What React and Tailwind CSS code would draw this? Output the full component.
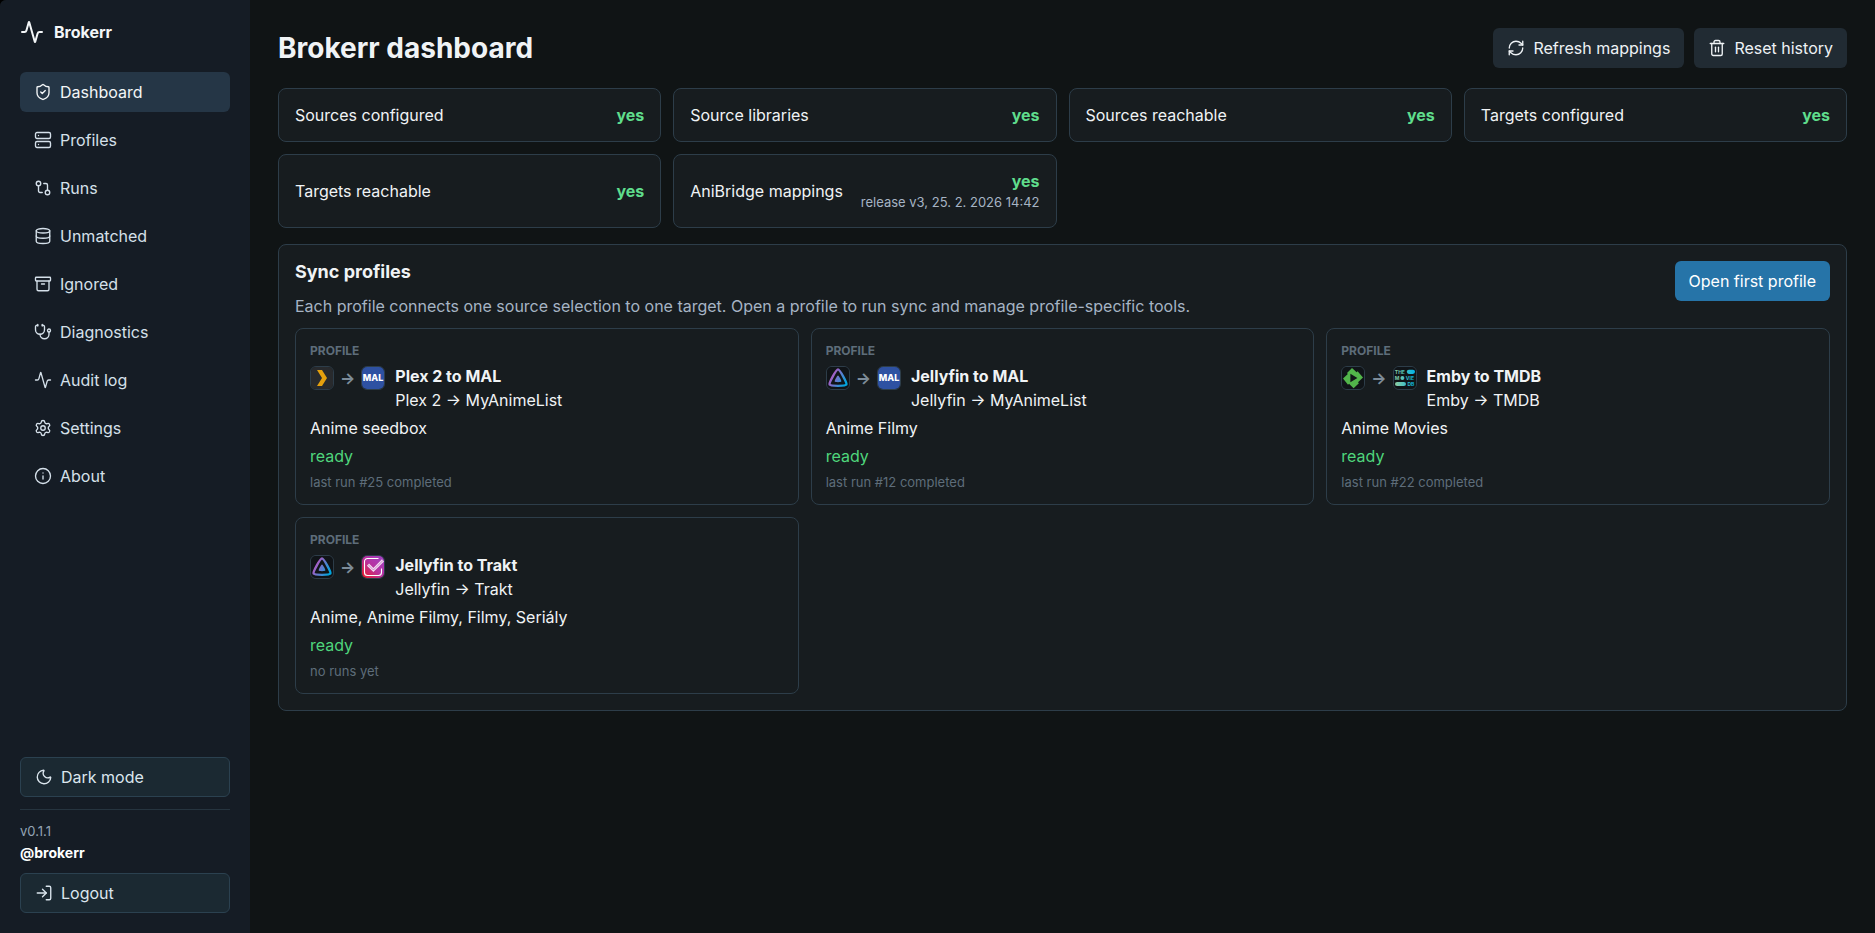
import {
  Activity, Archive, Database, GitCompare, Info, LogIn, Moon, RefreshCw,
  Server, Settings, ShieldCheck, Stethoscope, Trash2,
} from "lucide-react";

const NAV = [
  { label: "Dashboard", icon: ShieldCheck, active: true },
  { label: "Profiles", icon: Server },
  { label: "Runs", icon: GitCompare },
  { label: "Unmatched", icon: Database },
  { label: "Ignored", icon: Archive },
  { label: "Diagnostics", icon: Stethoscope },
  { label: "Audit log", icon: Activity },
  { label: "Settings", icon: Settings },
  { label: "About", icon: Info },
];

const CHECKS = [
  { label: "Sources configured" },
  { label: "Source libraries" },
  { label: "Sources reachable" },
  { label: "Targets configured" },
  { label: "Targets reachable" },
  { label: "AniBridge mappings", note: "release v3, 25. 2. 2026 14:42" },
];

const PROFILES = [
  { name: "Plex 2 to MAL", from: "Plex 2", to: "MyAnimeList", source: PlexLogo, target: MalLogo, libraries: "Anime seedbox", lastRun: "last run #25 completed" },
  { name: "Jellyfin to MAL", from: "Jellyfin", to: "MyAnimeList", source: JellyfinLogo, target: MalLogo, libraries: "Anime Filmy", lastRun: "last run #12 completed" },
  { name: "Emby to TMDB", from: "Emby", to: "TMDB", source: EmbyLogo, target: TmdbLogo, libraries: "Anime Movies", lastRun: "last run #22 completed" },
  { name: "Jellyfin to Trakt", from: "Jellyfin", to: "Trakt", source: JellyfinLogo, target: TraktLogo, libraries: "Anime, Anime Filmy, Filmy, Seriály", lastRun: "no runs yet" },
];

function PlexLogo() {
  return (
    <svg viewBox="0 0 22 22" className="size-full bg-[#282a2d]" aria-hidden="true">
      <path d="M6 3h5l5 8-5 8H6l5-8z" fill="#e5a00d" />
    </svg>
  );
}

function MalLogo() {
  return (
    <svg viewBox="0 0 22 22" className="size-full bg-[#2e51a2]" aria-hidden="true">
      <text x="11" y="14.4" textAnchor="middle" fontSize="9" fontWeight="800" fill="#fff">MAL</text>
    </svg>
  );
}

function JellyfinLogo() {
  return (
    <svg viewBox="0 0 22 22" className="size-full bg-[#101418]" aria-hidden="true">
      <defs>
        <linearGradient id="jellyfin" gradientUnits="userSpaceOnUse" x1="5" y1="8" x2="19" y2="16">
          <stop offset="0" stopColor="#aa5cc3" />
          <stop offset="1" stopColor="#00a4dc" />
        </linearGradient>
      </defs>
      <path d="M11 2.4C12.7 2.4 20.2 16 19.4 17.6C18.6 19.3 3.4 19.3 2.6 17.6C1.8 16 9.3 2.4 11 2.4Z" fill="none" stroke="url(#jellyfin)" strokeWidth="2.4" strokeLinejoin="round" />
      <path d="M11 8.6C11.8 8.6 14.7 13.8 14.3 14.6C13.9 15.4 8.1 15.4 7.7 14.6C7.3 13.8 10.2 8.6 11 8.6Z" fill="url(#jellyfin)" />
    </svg>
  );
}

function EmbyLogo() {
  return (
    <svg viewBox="0 0 22 22" className="size-full bg-[#101418]" aria-hidden="true">
      <path d="M10 .9l4.6 4.3 1-.9 5.4 6.3-5 4.7.9 1-5.3 4.9-4.6-4.5-1 1L1 11.5l4.8-4.6-.8-.9z" fill="#52b54b" />
      <path d="M8.4 6.8v8.4l7-4.2z" fill="#101418" />
    </svg>
  );
}

function TmdbLogo() {
  return (
    <svg viewBox="0 0 22 22" className="size-full bg-[#101418]" aria-hidden="true">
      <defs>
        <linearGradient id="tmdb" gradientUnits="userSpaceOnUse" x1="1" y1="11" x2="21" y2="11">
          <stop offset="0" stopColor="#90cea1" />
          <stop offset=".56" stopColor="#3cbec9" />
          <stop offset="1" stopColor="#00b3e5" />
        </linearGradient>
      </defs>
      <g fill="url(#tmdb)" fontSize="5" fontWeight="700">
        <text x="0.8" y="6.6">THE</text>
        <rect x="12.8" y="2.7" width="8.2" height="4.2" rx="2.1" />
        <text x="0.8" y="12.8">M</text>
        <circle cx="8.4" cy="11" r="2" />
        <text x="11.8" y="12.8">VIE</text>
        <rect x="1" y="14.9" width="11" height="4.2" rx="2.1" />
        <text x="13.4" y="18.8">DB</text>
      </g>
    </svg>
  );
}

function TraktLogo() {
  return (
    <svg viewBox="0 0 22 22" className="size-full" aria-hidden="true">
      <defs>
        <linearGradient id="trakt" x1="0" y1="1" x2="1" y2="0">
          <stop offset="0" stopColor="#ed1c24" />
          <stop offset=".5" stopColor="#b8319f" />
          <stop offset="1" stopColor="#9f42c6" />
        </linearGradient>
      </defs>
      <rect width="22" height="22" fill="url(#trakt)" />
      <path d="M16.5 2.5H5.5a3 3 0 0 0-3 3v11a3 3 0 0 0 3 3h11a3 3 0 0 0 3-3V12.5" fill="none" stroke="#fff" strokeWidth="1.1" />
      <path d="M6 8.6l5.4 5.4L21 4.4" fill="none" stroke="#f3d9f1" strokeWidth="3" />
      <path d="M6 8.6l5.4 5.4L21 4.4" fill="none" stroke="#b956b4" strokeWidth=".6" />
    </svg>
  );
}

function Logo({ art: Art }) {
  return (
    <span className="block size-6 shrink-0 overflow-hidden rounded-md border border-[#2d3d49]">
      <Art />
    </span>
  );
}

function SidebarButton({ icon: Icon, children }) {
  return (
    <button type="button" className="flex h-10 w-full items-center gap-2 rounded-md border border-[#2b4150] bg-[#1b2932] px-3.5 text-base text-[#dbe6ee]">
      <Icon size={18} strokeWidth={1.8} aria-hidden="true" />
      {children}
    </button>
  );
}

function Sidebar() {
  return (
    <aside className="flex w-[250px] shrink-0 flex-col rounded-tl-md bg-[#151c25] p-5">
      <div className="mb-7 flex h-6 items-center gap-2.5 font-bold text-[#f3f6f8]">
        <Activity size={24} strokeWidth={2} aria-hidden="true" />
        Brokerr
      </div>
      <nav className="flex flex-col gap-2" aria-label="Main">
        {NAV.map(({ label, icon: Icon, active }) => (
          <a
            key={label}
            href="#"
            aria-current={active ? "page" : undefined}
            className={
              active
                ? "flex h-10 items-center gap-2 rounded-md bg-[#253646] px-3.5 text-[#f3f6f8]"
                : "flex h-10 items-center gap-2 rounded-md px-3.5 text-[#d5e0ea]"
            }
          >
            <Icon size={18} strokeWidth={1.8} aria-hidden="true" />
            {label}
          </a>
        ))}
      </nav>
      <div className="mt-auto">
        <SidebarButton icon={Moon}>Dark mode</SidebarButton>
        <div className="mt-3 border-t border-[#26343f] pt-[11px] leading-[21px]">
          <div className="text-[13px] text-[#93a4b5]">v0.1.1</div>
          <div className="mb-2.5 text-sm leading-[21px] font-bold text-white">@brokerr</div>
          <SidebarButton icon={LogIn}>Logout</SidebarButton>
        </div>
      </div>
    </aside>
  );
}

function HeaderButton({ icon: Icon, children }) {
  return (
    <button type="button" className="flex h-10 items-center gap-2 rounded-md bg-[#212b33] px-3.5 text-[#eef2f5]">
      <Icon size={18} strokeWidth={1.8} aria-hidden="true" />
      {children}
    </button>
  );
}

function CheckCard({ label, note }) {
  return (
    <div className="flex items-center justify-between gap-3 rounded-lg border border-[#2d3d49] bg-[#171c1f] p-4">
      <dt className="leading-5">{label}</dt>
      <dd className="flex flex-col items-end gap-0.5">
        <span className="leading-5 font-bold text-[#5fdd8c]">yes</span>
        {note && <span className="text-[13px] leading-[18px] whitespace-nowrap text-[#a6b4c4]">{note}</span>}
      </dd>
    </div>
  );
}

function ProfileCard({ profile }) {
  return (
    <a href="#" className="flex flex-col gap-1 rounded-lg border border-[#2d3d49] bg-[#171c1f] px-3.5 pt-3.5 pb-3">
      <span className="mb-0.5 text-xs leading-[15px] font-bold text-[#5e6d7a]">PROFILE</span>
      <span className="flex gap-2.5">
        <span className="mt-0.5 flex h-6 items-center gap-1.5">
          <Logo art={profile.source} />
          <span className="font-bold text-[#7d8c99]">→</span>
          <Logo art={profile.target} />
        </span>
        <span className="flex flex-col">
          <strong className="font-bold">{profile.name}</strong>
          <span>{profile.from} → {profile.to}</span>
        </span>
      </span>
      <span>{profile.libraries}</span>
      <span className="text-[#4fd67c]">ready</span>
      <span className="text-[13px] leading-5 text-[#5e6d7a]">{profile.lastRun}</span>
    </a>
  );
}

export default function App() {
  return (
    <div className="min-h-screen bg-black font-['Inter',sans-serif] text-base text-[#f0f3f5]">
      <div className="flex min-h-screen rounded-tl-md bg-[#101415]">
        <Sidebar />
        <main className="min-w-0 flex-1 p-7">
          <header className="mb-5 flex items-center justify-between gap-4">
            <h1 className="text-[28px] leading-10 font-bold">Brokerr dashboard</h1>
            <div className="flex gap-2.5">
              <HeaderButton icon={RefreshCw}>Refresh mappings</HeaderButton>
              <HeaderButton icon={Trash2}>Reset history</HeaderButton>
            </div>
          </header>

          <dl className="mb-4 grid grid-cols-4 gap-3">
            {CHECKS.map((check) => <CheckCard key={check.label} {...check} />)}
          </dl>

          <section className="rounded-lg border border-[#2d3d49] bg-[#171c1f] p-4">
            <div className="mb-2.5 flex items-start justify-between gap-4">
              <div>
                <h2 className="mb-3 text-lg leading-[22px] font-bold">Sync profiles</h2>
                <p className="leading-[23px] text-[#a6b4c4]">
                  Each profile connects one source selection to one target. Open a profile to run sync and manage profile-specific tools.
                </p>
              </div>
              <button type="button" className="h-10 shrink-0 rounded-md bg-[#2674a8] px-3.5 text-white">Open first profile</button>
            </div>
            <div className="grid grid-cols-3 gap-3">
              {PROFILES.map((profile) => <ProfileCard key={profile.name} profile={profile} />)}
            </div>
          </section>
        </main>
      </div>
    </div>
  );
}
